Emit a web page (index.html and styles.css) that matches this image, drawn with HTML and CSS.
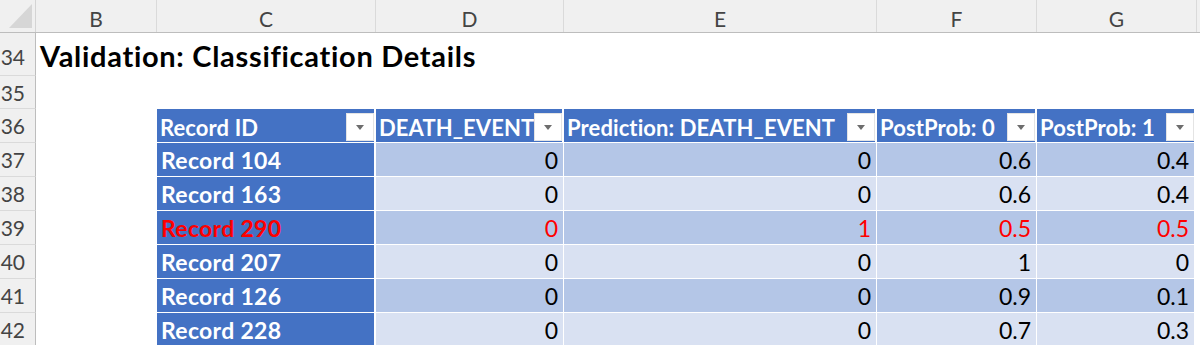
FILE: index.html
```html
<!DOCTYPE html>
<html>
<head>
<meta charset="utf-8">
<link rel="stylesheet" href="styles.css">
</head>
<body>
<div class="sheet">
  <div class="colhead">
    <div class="corner"><svg width="35" height="32" viewBox="0 0 35 32"><polygon points="9,28 32,28 32,4" fill="#d6d6d6"/></svg></div>
    <div class="ch cb">B</div>
    <div class="ch cc">C</div>
    <div class="ch cd">D</div>
    <div class="ch ce">E</div>
    <div class="ch cf">F</div>
    <div class="ch cg">G</div>
  </div>

  <div class="row row-title">
    <div class="rh">34</div>
    <div class="title">Validation: Classification Details</div>
  </div>

  <div class="row row-blank">
    <div class="rh">35</div>
  </div>

  <div class="row row-tbl">
    <div class="rh">36</div>
    <div class="cb"></div>
    <div class="th cc"><span class="lbl">Record ID</span><span class="dd"></span></div>
    <div class="th cd"><span class="lbl">DEATH_EVENT</span><span class="dd"></span></div>
    <div class="th ce"><span class="lbl">Prediction: DEATH_EVENT</span><span class="dd"></span></div>
    <div class="th cf"><span class="lbl">PostProb: 0</span><span class="dd"></span></div>
    <div class="th cg"><span class="lbl">PostProb: 1</span><span class="dd"></span></div>
  </div>

  <div class="row row-tbl band-a">
    <div class="rh">37</div>
    <div class="cb"></div>
    <div class="rid cc">Record 104</div>
    <div class="td cd">0</div>
    <div class="td ce">0</div>
    <div class="td cf">0.6</div>
    <div class="td cg">0.4</div>
  </div>

  <div class="row row-tbl band-b">
    <div class="rh">38</div>
    <div class="cb"></div>
    <div class="rid cc">Record 163</div>
    <div class="td cd">0</div>
    <div class="td ce">0</div>
    <div class="td cf">0.6</div>
    <div class="td cg">0.4</div>
  </div>

  <div class="row row-tbl band-a miss">
    <div class="rh">39</div>
    <div class="cb"></div>
    <div class="rid cc">Record 290</div>
    <div class="td cd">0</div>
    <div class="td ce">1</div>
    <div class="td cf">0.5</div>
    <div class="td cg">0.5</div>
  </div>

  <div class="row row-tbl band-b">
    <div class="rh">40</div>
    <div class="cb"></div>
    <div class="rid cc">Record 207</div>
    <div class="td cd">0</div>
    <div class="td ce">0</div>
    <div class="td cf">1</div>
    <div class="td cg">0</div>
  </div>

  <div class="row row-tbl band-a">
    <div class="rh">41</div>
    <div class="cb"></div>
    <div class="rid cc">Record 126</div>
    <div class="td cd">0</div>
    <div class="td ce">0</div>
    <div class="td cf">0.9</div>
    <div class="td cg">0.1</div>
  </div>

  <div class="row row-tbl band-b">
    <div class="rh">42</div>
    <div class="cb"></div>
    <div class="rid cc">Record 228</div>
    <div class="td cd">0</div>
    <div class="td ce">0</div>
    <div class="td cf">0.7</div>
    <div class="td cg">0.3</div>
  </div>
</div>
</body>
</html>
```

FILE: styles.css
```css
* { box-sizing: border-box; }

html, body {
  margin: 0;
  padding: 0;
  background: #ffffff;
  overflow: hidden;
}

.sheet {
  width: 1200px;
  height: 345px;
  overflow: hidden;
  font-family: Lato, "Liberation Sans", sans-serif;
}

.cb { width: 121px; flex: none; }
.cc { width: 219px; flex: none; }
.cd { width: 188px; flex: none; }
.ce { width: 313px; flex: none; }
.cf { width: 160px; flex: none; }
.cg { width: 160px; flex: none; }

/* column header */
.colhead {
  display: flex;
  height: 33px;
  background: #f0f0f0;
  border-bottom: 1px solid #bdbdbd;
}

.corner {
  width: 36px;
  flex: none;
  border-right: 1px solid #d4d4d4;
  display: flex;
  align-items: flex-start;
}

.ch {
  display: flex;
  align-items: center;
  justify-content: center;
  padding-top: 5px;
  font-size: 21px;
  color: #444444;
  border-right: 1px solid #dadada;
}

/* rows */
.row {
  display: flex;
}

.rh {
  width: 36px;
  flex: none;
  background: #f0f0f0;
  border-right: 1px solid #bdbdbd;
  border-bottom: 1px solid #dadada;
  color: #444444;
  font-size: 21px;
  display: flex;
  align-items: center;
  justify-content: flex-end;
  padding-right: 10px;
  white-space: nowrap;
  overflow: hidden;
}

.row-title { height: 43px; }
.row-title .rh {
  align-items: flex-end;
  padding-bottom: 6px;
}

.title {
  padding-left: 4px;
  padding-bottom: 3px;
  display: flex;
  align-items: flex-end;
  font-weight: 700;
  font-size: 29px;
  letter-spacing: 0.7px;
  color: #000000;
  white-space: nowrap;
}

.row-blank { height: 33px; }

.row-tbl { height: 34px; }

/* table header */
.th {
  background: #4472c4;
  color: #ffffff;
  font-weight: 700;
  font-size: 22px;
  letter-spacing: 0.1px;
  display: flex;
  align-items: center;
  border-right: 2px solid #ffffff;
  border-bottom: 1px solid #ffffff;
  padding-left: 3px;
  overflow: hidden;
}

.th .lbl {
  flex: 1;
  min-width: 0;
  white-space: nowrap;
  padding-top: 3px;
}

.dd {
  flex: none;
  width: 28px;
  height: 28px;
  align-self: flex-end;
  margin-bottom: 1px;
  background: #ffffff;
  border: 1px solid #e4e4e4;
  position: relative;
}

.dd::after {
  content: "";
  position: absolute;
  left: 9px;
  top: 11px;
  border-left: 4px solid transparent;
  border-right: 4px solid transparent;
  border-top: 5px solid #6d6d6d;
}

/* record id column */
.rid {
  background: #4472c4;
  color: #ffffff;
  font-weight: 700;
  font-size: 23px;
  letter-spacing: 0.3px;
  display: flex;
  align-items: center;
  padding-left: 4px;
  border-right: 2px solid #ffffff;
  border-bottom: 1px solid #ffffff;
  white-space: nowrap;
}

/* data cells */
.td {
  display: flex;
  align-items: center;
  justify-content: flex-end;
  padding-right: 5px;
  font-size: 23px;
  color: #000000;
  border-right: 1px solid #ffffff;
  border-bottom: 1px solid #ffffff;
}

.td.cg { border-right-width: 3px; }
.th.cg { border-right-width: 3px; }

.band-a .td { background: #b4c6e7; }
.band-b .td { background: #d9e1f2; }

.miss .td,
.miss .rid { color: #ff0000; }
```
